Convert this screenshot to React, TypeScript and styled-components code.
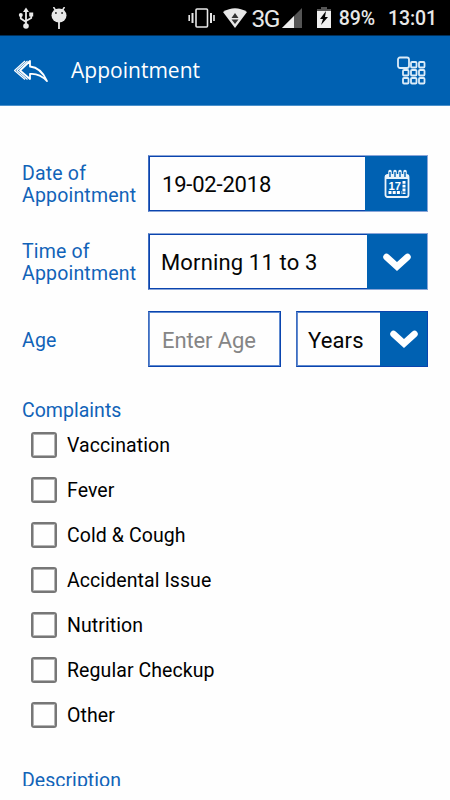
import React from "react";
import styled, { createGlobalStyle } from "styled-components";

const Global = createGlobalStyle`
  * { box-sizing: border-box; }
  html, body { margin: 0; background: #fefefe; }
  body { font-family: Roboto, sans-serif; color: #000; overflow: hidden; }
`;

const blue = "#0061b2";
const line = "#0a44ae";

const Screen = styled.div`
  width: 450px;
  height: 786px;
  overflow: hidden;
`;

const StatusBar = styled.div`
  height: 36px;
  background: #000;
  color: #e8e8e8;
  display: flex;
  align-items: center;
  justify-content: space-between;
  padding: 0 13px 0 18px;
  border-bottom: 1px solid #00305a;
`;

const StatusGroup = styled.div`
  display: flex;
  align-items: center;
`;

const StatusText = styled.span<{ $size: number; $gap: number; $spacing?: number; $weight?: number }>`
  font-size: ${(p) => p.$size}px;
  font-weight: ${(p) => p.$weight ?? 400};
  line-height: 32px;
  padding-top: 3px;
  margin-left: ${(p) => p.$gap}px;
  letter-spacing: ${(p) => p.$spacing ?? 0}px;
`;

const Icon = styled.svg<{ $gap?: number }>`
  display: block;
  flex: none;
  margin-left: ${(p) => p.$gap ?? 0}px;
`;

const Header = styled.header`
  height: 70px;
  background: ${blue};
  color: #fff;
  display: flex;
  align-items: center;
  padding: 0 24px 0 13px;
  border-bottom: 1px solid #4a90cb;
`;

const Title = styled.h1`
  flex: 1;
  margin: 0 0 1px 22px;
  font: 400 21px/30px "Open Sans", sans-serif;
  letter-spacing: 0.02px;
`;

const Form = styled.main`
  padding: 49px 22px 0;
`;

const Row = styled.div<{ $last?: boolean }>`
  display: flex;
  align-items: center;
  height: ${(p) => (p.$last ? 56 : 57)}px;
  margin-bottom: ${(p) => (p.$last ? 32 : 21)}px;
`;

const Label = styled.label`
  width: 126px;
  flex: none;
  padding-top: 3px;
  color: #1163b8;
  font-size: 19.5px;
  line-height: 22px;
  letter-spacing: 0.18px;
`;

const Field = styled.div<{ $width: number; $gap?: number; $crisp?: boolean }>`
  display: flex;
  width: ${(p) => p.$width}px;
  height: 100%;
  margin-left: ${(p) => p.$gap ?? 0}px;
  border: 1px solid ${(p) => (p.$crisp ? line : "#8aa5d8")};
  border-left-color: #3f6dc0;
  box-shadow: inset 0 0 0 1px ${(p) => (p.$crisp ? "#5f8ad0" : line)};
`;

const Value = styled.div<{ $pad: number; $spacing?: number; $muted?: boolean }>`
  flex: 1;
  padding-left: ${(p) => p.$pad}px;
  font-size: 22px;
  line-height: 58px;
  height: 54px;
  letter-spacing: ${(p) => p.$spacing ?? 0}px;
  white-space: nowrap;
  color: ${(p) => (p.$muted ? "#858585" : "#050505")};
`;

const FieldButton = styled.button<{ $width: number }>`
  width: ${(p) => p.$width}px;
  border: 0;
  padding: 0;
  background: ${blue};
  display: flex;
  align-items: center;
  justify-content: center;
`;

const SectionTitle = styled.h2`
  margin: 0;
  color: #1163b8;
  font-weight: 400;
  font-size: 19.5px;
  line-height: 24px;
  letter-spacing: 0.02px;
`;

const Options = styled.div`
  display: flex;
  flex-direction: column;
  padding: 0 0 31px 9px;
`;

const Option = styled.label`
  display: flex;
  align-items: center;
  height: 45px;
  gap: 10px;
  font-size: 19.5px;
  line-height: 24px;
  letter-spacing: 0.08px;
`;

const OptionText = styled.span`
  padding-top: 1px;
`;

const Check = styled.span`
  width: 26px;
  height: 26px;
  margin-bottom: 1px;
  border: 2px solid #777;
  box-shadow: inset 0 0 0 1px #b4b4b4;
  border-radius: 3px;
`;

const Chevron = () => (
  <Icon width="30" height="20" viewBox="0 0 30 20" fill="none" stroke="#fff" strokeWidth="6.5" strokeLinecap="round">
    <path d="M4.500 5 15 14.500 25.500 5" />
  </Icon>
);

const complaints = ["Vaccination", "Fever", "Cold & Cough", "Accidental Issue", "Nutrition", "Regular Checkup", "Other"];

export default function App() {
  return (
    <>
      <Global />
      <Screen>
        <StatusBar>
          <StatusGroup>
            <Icon width="16" height="24" viewBox="0 0 16 24" fill="none" stroke="#e8e8e8" strokeWidth="1.8">
              <path d="M8 4v16M2.800 9v3.500L8 16M13.200 8v4L8 15" />
              <path d="M5 6 8 1.500 11 6z" fill="#e8e8e8" stroke="none" />
              <circle cx="2.800" cy="9" r="2" fill="#e8e8e8" stroke="none" />
              <path d="M11.200 6.500h4v4h-4z" fill="#e8e8e8" stroke="none" />
              <circle cx="8" cy="20" r="2.800" fill="#e8e8e8" stroke="none" />
            </Icon>
            <Icon $gap={17} width="16" height="22" viewBox="0 0 16 22">
              <path d="M2.500 0 5 4M13.500 0 11 4" stroke="#e8e8e8" strokeWidth="1.500" />
              <ellipse cx="8" cy="8.500" rx="7.500" ry="7" fill="#e8e8e8" />
              <path d="M8 15v7" stroke="#e8e8e8" strokeWidth="1.800" />
              <path d="M4 6h1.800M10.200 6H12" stroke="#222" strokeWidth="1.600" />
            </Icon>
          </StatusGroup>
          <StatusGroup>
            <Icon width="27" height="20" viewBox="0 0 27 20" fill="none" stroke="#e8e8e8">
              <rect x="8" y="1" width="11.500" height="18" rx="1" strokeWidth="1.600" />
              <path d="M4.500 5v10M23 5v10" strokeWidth="2" />
              <path d="M1.200 7v6M26 7v6" strokeWidth="1.600" />
            </Icon>
            <Icon $gap={8} width="24" height="20" viewBox="0 0 24 20">
              <path d="M0 4Q12-3.500 24 4L12 20z" fill="#e8e8e8" />
              <path d="M12 5 15.500 10h-7zM8.500 11.500h7L12 16z" fill="#333" />
            </Icon>
            <StatusText $size={24.5} $gap={5} $spacing={-1.6}>3G</StatusText>
            <Icon $gap={3} width="20" height="20" viewBox="0 0 20 20">
              <path d="M20 0v20H0z" fill="#555" />
              <path d="M12 8v12H0z" fill="#eee" />
            </Icon>
            <Icon $gap={15} width="14" height="21" viewBox="0 0 14 21">
              <path d="M4 0h6v2h4v4H0V2h4z" fill="#555" />
              <path d="M0 4h14v17H0z" fill="#eee" />
              <path d="M9 4 3 12h3l-2 6 7-8H8z" fill="#000" />
            </Icon>
            <StatusText $size={19.5} $gap={8} $weight={500} $spacing={-0.1}>89%</StatusText>
            <StatusText $size={19.5} $gap={13} $weight={500} $spacing={-0.1}>13:01</StatusText>
          </StatusGroup>
        </StatusBar>
        <Header>
          <Icon width="36" height="22" viewBox="0 0 36 22" fill="none" stroke="#fff" strokeWidth="1.800" strokeLinejoin="round">
            <path d="M17 1 7 10.500 17 19v-5q9-1 17 7Q28 7.500 17 6.500z" />
            <path d="M14.500 1 4 10.500l10.500 9M12 1 1.500 10.500l10.500 9" strokeWidth="1.100" />
          </Icon>
          <Title>Appointment</Title>
          <Icon width="30" height="30" viewBox="0 0 30 30" fill="none" stroke="#dcecf8" strokeWidth="1.800">
            <rect x="2" y="1.500" width="11" height="10.500" rx="2" />
            {[[15, 6], [23, 6], [7, 14], [15, 14], [23, 14], [7, 22], [15, 22], [23, 22]].map(([x, y]) => (
              <rect key={`${x}-${y}`} x={x} y={y} width="5.500" height="5.500" rx="1" />
            ))}
          </Icon>
        </Header>
        <Form>
          <Row>
            <Label>Date of Appointment</Label>
            <Field $width={280}>
              <Value $pad={13} $spacing={-0.2}>19-02-2018</Value>
              <FieldButton $width={62} aria-label="Pick a date">
                <Icon $gap={2} width="26" height="30" viewBox="0 0 26 30">
                  <rect x="1.500" y="6" width="23" height="22" rx="2" fill="none" stroke="#eaf3fa" strokeWidth="1.800" />
                  <path d="M1 6h24v4H1z" fill="#eaf3fa" />
                  <path d="M6 7V2.500M11 7V2.500M16 7V2.500M21 7V2.500" stroke="#eaf3fa" strokeWidth="3.500" strokeLinecap="round" />
                  <path d="M6 8V3M11 8V3M16 8V3M21 8V3" stroke={blue} strokeWidth="1.400" />
                  <text x="4.500" y="20.500" fontSize="10.500" fontWeight="700" fontFamily="Liberation Sans, sans-serif" fill="#fff" textLength="12.500" lengthAdjust="spacingAndGlyphs">17</text>
                  <path d="M20 12v13" stroke="#fff" strokeWidth="3" strokeDasharray="2.800 1" />
                  <path d="M4.500 23.500h13" stroke="#fff" strokeWidth="2.800" strokeDasharray="3 1.200" />
                </Icon>
              </FieldButton>
            </Field>
          </Row>
          <Row>
            <Label>Time of Appointment</Label>
            <Field $width={280}>
              <Value $pad={12} $spacing={0.15}>Morning 11 to 3</Value>
              <FieldButton $width={60} aria-label="Choose a time"><Chevron /></FieldButton>
            </Field>
          </Row>
          <Row $last>
            <Label>Age</Label>
            <Field $width={133} $crisp>
              <Value $pad={13} $spacing={-0.1} $muted>Enter Age</Value>
            </Field>
            <Field $width={132} $gap={15} $crisp>
              <Value $pad={11} $spacing={0.15}>Years</Value>
              <FieldButton $width={47} aria-label="Choose a unit"><Chevron /></FieldButton>
            </Field>
          </Row>
          <SectionTitle>Complaints</SectionTitle>
          <Options>
            {complaints.map((name) => (
              <Option key={name}><Check /><OptionText>{name}</OptionText></Option>
            ))}
          </Options>
          <SectionTitle>Description</SectionTitle>
        </Form>
      </Screen>
    </>
  );
}
